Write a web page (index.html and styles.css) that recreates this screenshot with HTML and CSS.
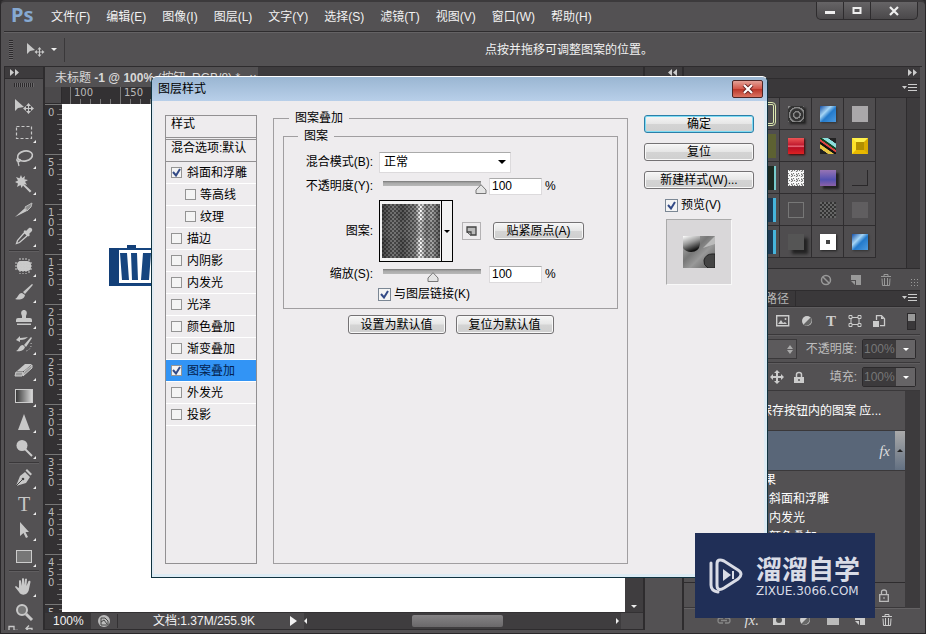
FILE: index.html
```html
<!DOCTYPE html>
<html lang="zh-CN">
<head>
<meta charset="utf-8">
<title>Photoshop</title>
<link rel="stylesheet" href="styles.css">
</head>
<body>
<div class="app">
  <header class="menubar">
    <span class="logo">Ps</span>
    <nav class="menus">
      <a href="#">文件(F)</a><a href="#">编辑(E)</a><a href="#">图像(I)</a><a href="#">图层(L)</a><a href="#">文字(Y)</a><a href="#">选择(S)</a><a href="#">滤镜(T)</a><a href="#">视图(V)</a><a href="#">窗口(W)</a><a href="#">帮助(H)</a>
    </nav>
    <div class="winctl">
      <button aria-label="最小化"><svg width="12" height="10"><path d="M1 5h10v3H1z" fill="#eee"/></svg></button>
      <button aria-label="最大化"><svg width="12" height="10"><path d="M2.500 2h7v5h-7z" fill="none" stroke="#eee" stroke-width="2"/></svg></button>
      <button class="wide" aria-label="关闭"><svg width="12" height="10"><path d="M2 1l8 8M10 1l-8 8" stroke="#eee" stroke-width="2.200"/></svg></button>
    </div>
  </header>

  <div class="options">
    <span class="grip-v"></span>
    <svg class="ic" width="20" height="16" viewBox="0 0 20 16"><path d="M1 1v11l3-3 5-1z"/><path d="M13.500 5l2 2.500h-1.500v2h2v-1.500l2.500 2-2.500 2v-1.500h-2v2h1.500l-2 2.500-2-2.500h1.500v-2h-2v1.500L8.500 10l2.500-2v1.500h2v-2h-1.500z"/></svg>
    <span class="caret"></span>
    <span class="hint">点按并拖移可调整图案的位置。</span>
  </div>

  <main class="work">
    <aside class="tools">
      <div class="dockhead left"><svg width="9" height="7"><path d="M0 0l4 3.500L0 7zM5 0l4 3.500L5 7z" fill="#ccc"/></svg></div>
      <div class="grip-h"></div>
      <button class="solo" aria-label="移动"><svg class="ic" viewBox="0 0 20 20"><path d="M1 3v12l3-3 6-1z"/><path d="M14.500 7l2.500 3h-2v2h2v-2l3 2.500-3 2.500v-2h-2v2h2l-2.500 3-2.500-3h2v-2h-2v2L9 12.500l3-2.500v2h2v-2h-2z"/></svg></button>
      <button aria-label="选框"><svg class="ln" viewBox="0 0 20 20"><path d="M2.500 4.500h15v12h-15z" stroke-dasharray="3 2"/></svg></button>
      <button aria-label="套索"><svg class="ln" viewBox="0 0 20 20"><ellipse cx="11" cy="8" rx="7.500" ry="5" transform="rotate(-12 11 8)" stroke-width="1.600"/><path d="M4 10c-3 2 0 5 2 3s-3-3-2 1l1 4"/></svg></button>
      <button aria-label="魔棒"><svg class="ic" viewBox="0 0 20 20"><path d="M7 1l1.200 3L11 2l-.6 3.300L14 6l-3 1.800 2 3-3-.8 7.500 7-1.600 1.600L9 11.500 7.500 14l-1-3L3 13l1-3.500L1 8l3-1.500L2 3l3.500 1.300z"/></svg></button>
      <button aria-label="切片"><svg class="ic" viewBox="0 0 20 20"><path d="M1 17l10-9 2 3z"/><path d="M11 7l7-4-1 4-4 4z" fill="#8d8d8d" stroke="#bbb"/></svg></button>
      <button aria-label="吸管"><svg class="ic" viewBox="0 0 20 20"><path d="M12 5l3-3c2-1 4 1 3 3l-3 3 1 1-1.500 1.500-5-5L11 4z"/><path d="M10.500 6.500l3 3-8 7-3 1 1-3z" fill="none" stroke="#ccc" stroke-width="1.300"/></svg></button>
      <hr>
      <button aria-label="修补"><svg class="ic" viewBox="0 0 20 20"><rect x="3" y="5" width="14" height="10" rx="4"/><path d="M6 2v16M9 2v16M12 2v16M15 3v14M1 7h18M1 10h18M1 13h18" stroke="#ccc" stroke-width="1" stroke-dasharray="2 1"/></svg></button>
      <button aria-label="画笔"><svg class="ic" viewBox="0 0 20 20"><path d="M18 2c1 0 1 1 0 2l-7 8-2-2z"/><path d="M8 11l3 2c-1 5-6 5-10 4 3-1 3-6 7-6z"/></svg></button>
      <button aria-label="图章"><svg class="ic" viewBox="0 0 20 20"><path d="M8 8c-4-8 8-8 4 0v2h4q2 0 2 2v2H2v-2q0-2 2-2h4zM3 15.500h14V17H3z"/></svg></button>
      <button aria-label="历史记录画笔"><svg class="ic" viewBox="0 0 20 20"><path d="M17 3l1 1-6 9-2-2zM9 11l2 2c-1 4-6 5-9 4 3-1 3-6 7-6zM2 6l4-4v2c4 0 6-1 8-1-2 2-4 3-8 3v2z"/><path d="M17 9c1 3-1 7-5 8" fill="none" stroke="#ccc" stroke-dasharray="1 2"/></svg></button>
      <button aria-label="橡皮擦"><svg class="ic" viewBox="0 0 20 20"><path d="M3 11l8-7h7l-8 7z"/><path d="M2 12h7l-1 4H1zM10 12l8-7v3l-9 8z" fill="#999" stroke="#ccc"/></svg></button>
      <button aria-label="渐变"><svg class="ic" viewBox="0 0 20 20"><defs><linearGradient id="g1"><stop stop-color="#333"/><stop offset="1" stop-color="#ddd"/></linearGradient></defs><rect x="1.500" y="3.500" width="17" height="13" fill="url(#g1)" stroke="#ccc"/></svg></button>
      <button aria-label="锐化"><svg class="ic" viewBox="0 0 20 20"><path d="M10 2l6 16H4z"/></svg></button>
      <button aria-label="减淡"><svg class="ic" viewBox="0 0 20 20"><circle cx="8" cy="7.500" r="5.500"/><path d="M11 11l7 7" stroke="#ccc" stroke-width="2"/></svg></button>
      <hr>
      <button aria-label="钢笔"><svg class="ic" viewBox="0 0 20 20"><path d="M13 1l5 5-1.500 1.500-5-5zM11 4l5 5-4 6-10 3 4-10z"/><circle cx="9" cy="11" r="1.300" fill="#444"/><path d="M2 18l7-7" stroke="#444"/></svg></button>
      <button aria-label="文字"><span class="tee">T</span></button>
      <button aria-label="路径选择"><svg class="ic" viewBox="0 0 20 20"><path d="M6 2v14l3.500-3 2.500 5 2-1-2.500-5H15z"/></svg></button>
      <button aria-label="矩形"><svg class="ic" viewBox="0 0 20 20"><rect x="2.500" y="4.500" width="15" height="12" fill="#777" stroke="#ccc"/></svg></button>
      <hr>
      <button aria-label="抓手"><svg class="ic" viewBox="0 0 20 20"><path d="M5 12V5q1-2 2 0l1 5V3q1-2 2 0v6l1-6q1-1 2 0l-.5 7 2-5q2-1 2 1l-1.500 7c-1 7-8 7-10 3L1 11q1-2 2 0z"/></svg></button>
      <button class="solo" aria-label="缩放"><svg class="ln" viewBox="0 0 20 20"><circle cx="8" cy="8" r="5" fill="#777" stroke-width="2"/><path d="M12 12l6 6" stroke-width="3"/></svg></button>
      <div class="swap"><svg class="ln" width="30" height="8" viewBox="0 0 30 8"><path d="M2 5.500V1.500h5v4h4M19 3.500h6v4M22 .5l-3 3 3 3" stroke-width="1.300"/></svg></div>
    </aside>

    <section class="doc">
      <div class="doctabs"><span class="doctab">未标题 <b>-1 @ 100%</b> (按钮, RGB/8) * <span class="x">×</span></span></div>
      <div class="sheet">
        <div class="corner"></div>
        <div class="hruler"><span>100</span><span>150</span><span>200</span><span>250</span><span>300</span><span>350</span><span>400</span><span>450</span><span>500</span><span>550</span><span>600</span></div>
        <div class="vruler"><span>0</span><span>50</span><span>100</span><span>150</span><span>200</span><span>250</span><span>300</span><span>350</span><span>400</span><span>450</span><span>500</span></div>
        <div class="canvas">
          <svg class="art" width="84" height="42" viewBox="0 0 84 42"><path d="M0 3h84v38H0z" fill="#133f78"/><path d="M18 0h9v4h-9z" fill="#133f78"/><path d="M10 5h74v33H10z" fill="#fff"/><path d="M11 8h7l2 27h-7zM22 8h6l1 27h-6zM34 8h8l-2 27h-8zM10 3h74v2H10zM11 39h73v2H11z" fill="#16457f"/></svg>
        </div>
      </div>
      <div class="status">
        <span class="zoom">100%</span>
        <span class="share"><svg width="14" height="14"><circle cx="7" cy="7" r="6" fill="#bbb"/><path d="M4 4h4l3 3v4H4zM4 8l3-2 3 4" fill="none" stroke="#444"/></svg></span>
        <span class="size">文档:1.37M/255.9K</span>
        <span class="play"></span>
        <div class="hscroll"><i class="al"></i><b></b><i class="ar"></i></div>
      </div>
      <div class="vscroll"><i></i></div>
    </section>

    <div class="strip"><div class="dockhead"><svg width="9" height="7"><path d="M4 0L0 3.500 4 7zM9 0L5 3.500 9 7z" fill="#ccc"/></svg></div></div>

    <aside class="panels">
      <div class="dockhead"><svg width="9" height="7"><path d="M0 0l4 3.500L0 7zM5 0l4 3.500L5 7z" fill="#ccc"/></svg></div>
      <div class="phead"><svg class="pm" width="15" height="9"><path d="M0 2h5L2.500 5z" fill="#ccc"/><path d="M6 .5h9M6 3.500h9M6 6.500h9" stroke="#ccc"/></svg></div>
      <div class="styles">
        <div class="grid">
          <i></i><i></i><i><u class="ring"></u></i><i><u class="knob"></u></i><i><u class="blue"></u></i><i><u class="grey"></u></i>
          <i></i><i></i><i><u class="olive"></u></i><i><u class="red"></u></i><i><u class="multi"></u></i><i><u class="gold"></u></i>
          <i></i><i></i><i><u class="dark"></u></i><i><u class="noise"></u></i><i><u class="violet"></u></i><i><u class="bevel"></u></i>
          <i></i><i></i><i><u class="cyan"></u></i><i><u class="line"></u></i><i><u class="mesh"></u></i><i><u class="faint"></u></i>
          <i></i><i></i><i><u class="cyan"></u></i><i><u class="shade"></u></i><i><u class="dot"></u></i><i><u class="blue"></u></i>
        </div>
        <div class="ptrack"></div>
      </div>
      <div class="pfoot">
        <svg class="dim" width="12" height="12"><circle cx="6" cy="6" r="4.500" fill="none" stroke="#999" stroke-width="1.500"/><path d="M3 3l6 6" stroke="#999" stroke-width="1.500"/></svg>
        <svg class="dim" width="12" height="12"><path d="M1 1h10v10H6V6H1z" fill="#999"/><path d="M1 7h4v4z" fill="#999"/></svg>
        <svg class="dim" width="12" height="12"><path d="M1 2.500h10M4 2V.5h4V2M2 4.500l.5 7h7l.5-7M4.500 4v7M7.500 4v7" fill="none" stroke="#999"/></svg>
        <span class="sizer"></span>
      </div>
      <div class="phead tabs"><span>图层</span><span>通道</span><span class="last">路径</span><svg class="pm" width="15" height="9"><path d="M0 2h5L2.500 5z" fill="#ccc"/><path d="M6 .5h9M6 3.500h9M6 6.500h9" stroke="#ccc"/></svg></div>
      <div class="prow filter">
        <svg width="14" height="12"><path d="M.7.7h12v10H.7z" fill="none" stroke="#ccc" stroke-width="1.400"/><path d="M2 9l3-4 2 3 2-1 2 2z" fill="#ccc"/><circle cx="9.500" cy="4" r="1" fill="#ccc"/></svg>
        <svg width="14" height="12"><circle cx="7" cy="6" r="5" fill="#ccc"/><path d="M10.500 2.500a5 5 0 0 1-7 7z" fill="#666"/></svg>
        <span class="tsm">T</span>
        <svg width="14" height="12"><path d="M3 2.500h8v7H3z" fill="none" stroke="#ccc"/><path d="M1 .5h3v3H1zM10 .5h3v3h-3zM1 8.500h3v3H1zM10 8.500h3v3h-3z" fill="#555" stroke="#ccc"/></svg>
        <svg width="14" height="12"><path d="M4.500 5V.7h5l3 3v7H8" fill="none" stroke="#ccc" stroke-width="1.300"/><path d="M1 6h6v6H1zM9 1v3h3z" fill="#ccc"/></svg>
        <span class="toggle"></span>
      </div>
      <div class="prow">
        <select class="mode" aria-label="混合模式"><option>正常</option></select>
        <label for="op">不透明度:</label>
        <span class="combo"><input id="op" value="100%"><button aria-label="展开不透明度"></button></span>
      </div>
      <div class="prow">
        <svg class="lk" width="14" height="14"><path d="M7 0l3 3H8v3h3V4l3 3-3 3V8H8v3h2l-3 3-3-3h2V8H3v2L0 7l3-3v2h3V3H4z" fill="#ccc"/></svg>
        <svg class="lk2" width="12" height="13"><path d="M1 6h10v6H1z" fill="#ccc"/><path d="M3.500 6V3.500q0-2 2.500-2t2.500 2V6" fill="none" stroke="#ccc" stroke-width="1.500"/><path d="M6 8v2" stroke="#555" stroke-width="1.500"/></svg>
        <label for="fl">填充:</label>
        <span class="combo"><input id="fl" value="100%"><button aria-label="展开填充"></button></span>
      </div>
      <div class="layers">
        <div class="list">
          <div class="layer"><span>保存按钮内的图案 应...</span></div>
          <div class="layer on"><em>fx</em><b></b></div>
          <div class="fxs"><span class="top">效果</span><span>斜面和浮雕</span><span>内发光</span><span>颜色叠加</span></div>
          <div class="layer base"><svg width="10" height="13"><path d="M.7 5.700h8.600v6.600H.7zM2.500 5.500V3q0-2 2.500-2t2.500 2v2.500" fill="none" stroke="#bbb" stroke-width="1.300"/><path d="M5 8v2" stroke="#bbb"/></svg></div>
        </div>
      </div>
      <div class="lfoot">
        <svg width="14" height="12"><path d="M6 9H3q-2 0-2-2.500T3 4h3M8 4h3q2 0 2 2.500T11 9H8M4 6.500h6" fill="none" stroke="#888" stroke-width="1.300"/></svg>
        <em>fx.</em>
        <svg width="14" height="12"><path d="M1 1h12v10H1z" fill="#ccc"/><circle cx="7" cy="6" r="3" fill="#555"/></svg>
        <svg width="14" height="12"><circle cx="6" cy="6" r="5" fill="#ccc"/><path d="M9.500 2.500a5 5 0 0 1-7 7z" fill="#666"/></svg>
        <svg width="14" height="12"><path d="M1 1h5l1 1h6v9H1z" fill="#bbb"/></svg>
        <svg width="14" height="12"><path d="M2 1h10v10H7V6H2zM2 7h4v4z" fill="#ccc"/></svg>
        <svg width="14" height="12"><path d="M2 2.500h10M5 2V.5h4V2M3 4.500l.5 7h7l.5-7M5.500 4v7M8.500 4v7" fill="none" stroke="#ccc"/></svg>
      </div>
    </aside>
  </main>
</div>

<section class="dialog" role="dialog" aria-labelledby="dt">
  <header class="dtitle"><h1 id="dt">图层样式</h1><button aria-label="关闭"><svg width="12" height="10"><path d="M2 1l8 8M10 1L2 9" stroke="#622" stroke-width="4"/><path d="M2 1l8 8M10 1L2 9" stroke="#fff" stroke-width="2.200"/></svg></button></header>
  <div class="dbody">
    <div class="effects">
      <div class="eh first">样式</div>
      <div class="eh">混合选项:默认</div>
      <label><input type="checkbox" checked>斜面和浮雕</label>
      <label class="sub"><input type="checkbox">等高线</label>
      <label class="sub"><input type="checkbox">纹理</label>
      <label><input type="checkbox">描边</label>
      <label><input type="checkbox">内阴影</label>
      <label><input type="checkbox">内发光</label>
      <label><input type="checkbox">光泽</label>
      <label><input type="checkbox">颜色叠加</label>
      <label><input type="checkbox">渐变叠加</label>
      <label class="sel"><input type="checkbox" checked>图案叠加</label>
      <label><input type="checkbox">外发光</label>
      <label><input type="checkbox">投影</label>
    </div>
    <fieldset class="outer">
      <legend>图案叠加</legend>
      <fieldset class="inner">
        <legend>图案</legend>
        <div class="frow"><label class="fl" for="bm">混合模式(B):</label><select id="bm" class="blend"><option>正常</option></select></div>
        <div class="frow"><label class="fl" for="o1">不透明度(Y):</label><input type="range" aria-label="不透明度" value="100"><input class="num" id="o1" value="100"><span>%</span></div>
        <div class="frow tall"><span class="fl">图案:</span>
          <button class="pattern" aria-label="图案拾色器"><span class="pat"></span><span class="drop"></span></button>
          <button class="new" aria-label="新建图案"><svg width="11" height="10"><path d="M1 1h9v8H5V6H1z" fill="#bbb" stroke="#444" stroke-width="1.300"/><path d="M1 6l4 3.500" stroke="#444"/></svg></button>
          <button class="btn snap">贴紧原点(A)</button>
        </div>
        <div class="frow short"><label class="fl" for="s1">缩放(S):</label><input type="range" aria-label="缩放" value="50"><input class="num" id="s1" value="100"><span>%</span></div>
        <div class="frow short link"><label><input type="checkbox" checked>与图层链接(K)</label></div>
      </fieldset>
      <div class="defaults"><button class="btn">设置为默认值</button><button class="btn">复位为默认值</button></div>
    </fieldset>
    <div class="actions">
      <button class="btn primary">确定</button>
      <button class="btn">复位</button>
      <button class="btn">新建样式(W)...</button>
      <label><input type="checkbox" checked>预览(V)</label>
      <div class="preview"><svg width="32" height="32" viewBox="0 0 32 32"><defs><linearGradient id="p1" x2="1" y2="1"><stop stop-color="#bbb"/><stop offset=".4" stop-color="#777"/><stop offset=".6" stop-color="#999"/><stop offset="1" stop-color="#555"/></linearGradient><linearGradient id="p2" x2=".4" y2="1"><stop stop-color="#fff"/><stop offset=".5" stop-color="#999"/><stop offset="1" stop-color="#111"/></linearGradient></defs><path d="M0 0h32v32H0z" fill="url(#p1)"/><path d="M20 12L32 0v8z" fill="#bbb"/><path d="M0 0h17v8q-1 8-9 8-5 0-8-4z" fill="url(#p2)"/><path d="M32 18v14h-7q-5-3-4-8 2-6 8-6z" fill="#444" stroke="#222"/></svg></div>
    </div>
  </div>
</section>

<div class="brand">
  <svg width="36" height="38" viewBox="0 0 36 38"><path d="M3 6v22q0 6 7 7" fill="none" stroke="#d9dce6" stroke-width="3" stroke-linecap="round"/><path d="M9 7q0-6 7-3l14 9q6 4 0 9l-14 9q-7 4-7-3z" fill="none" stroke="#d9dce6" stroke-width="3"/><path d="M15 12l8 6-8 6z" fill="#d9dce6"/><path d="M25 14v8" stroke="#d9dce6" stroke-width="2"/></svg>
  <div><strong>溜溜自学</strong><small>ZIXUE.3066.COM</small></div>
</div>
</body>
</html>
```

FILE: styles.css
```css
* { box-sizing: border-box; }
html, body { height: 100%; margin: 0; }
body { position: relative; overflow: hidden; background: #2c2a2c; font: 12px/16px "Liberation Sans", "Noto Sans CJK SC", sans-serif; color: #e6e6e6; }
button, input, select { font: inherit; color: inherit; margin: 0; padding: 0; border: 0; border-radius: 0; }
button { display: flex; align-items: center; justify-content: center; background: none; }
a { color: inherit; text-decoration: none; }
svg { display: block; flex: none; }

.app { height: 100%; display: flex; flex-direction: column; background: #535153; border: 1px solid #2a282a; border-top: 2px solid #3c3a3c; border-radius: 5px 5px 0 0; padding: 0 3px 3px; }
.menubar { height: 30px; flex: none; display: flex; align-items: center; border-bottom: 1px solid #2e2c2e; }
.logo { width: 31px; margin: 0 9px 4px 7px; font: bold 20px/26px "Noto Sans", sans-serif; color: #86a9d2; }
.menus { display: flex; gap: 16px; flex: 1; color: #f2f2f2; }
.winctl { display: flex; align-self: flex-start; margin-right: 4px; border: 1px solid #2e2c2e; border-top: 0; border-radius: 0 0 5px 5px; background: linear-gradient(#666466, #4a484a); }
.winctl button { width: 27px; height: 17px; border-right: 1px solid #2e2c2e; }
.winctl .wide { width: 46px; border: 0; }
.options { height: 35px; flex: none; display: flex; align-items: center; border-top: 1px solid #646264; border-bottom: 1px solid #2e2c2e; }
.grip-v { width: 4px; height: 20px; margin: 0 13px 0 5px; background: repeating-linear-gradient(#2c2a2c 0 1px, #6a686a 1px 2px); }
.ic { fill: #c8c8c8; }
.ln { fill: none; stroke: #c8c8c8; stroke-width: 1.2; }
.caret { border: 3px solid transparent; border-top-color: #eee; border-bottom: 0; margin: 0 5px 0 5px; }
.hint { flex: 1; margin-left: 2px; padding-left: 420px; height: 24px; line-height: 24px; border-left: 1px solid #3a383a; color: #f2f2f2; }

.work { flex: 1; min-height: 0; display: flex; padding-right: 2px; }
.dockhead { height: 12px; flex: none; background: #3d3b3d; border-bottom: 1px solid #2e2c2e; display: flex; align-items: center; justify-content: flex-end; padding-right: 3px; }
.dockhead.left { justify-content: flex-start; padding-left: 5px; }

.tools { width: 41px; flex: none; border-right: 2px solid #2e2c2e; border-left: 1px solid #2e2c2e; overflow: hidden; }
.grip-h { width: 20px; height: 4px; margin: 4px 0 6px 9px; background: repeating-linear-gradient(90deg, #2c2a2c 0 1px, #6a686a 1px 2px); }
.tools button { width: 38px; height: 26px; position: relative; }
.tools button svg { width: 20px; height: 20px; }
.tools button::after { content: ""; position: absolute; right: 7px; bottom: 2px; border-left: 3px solid transparent; border-bottom: 3px solid #eee; }
.tools .solo::after { display: none; }
.tools hr { height: 2px; margin: 1px 4px; border: 0; background: #3a383a; border-bottom: 1px solid #605e60; }
.tee { font: 20px/22px "Liberation Serif", serif; color: #c8c8c8; }
.swap { padding-left: 2px; }

.doc { flex: 1; min-width: 0; display: grid; grid-template: 20px 1fr 18px / 1fr 18px; }
.doctabs { grid-column: 1 / 3; background: #3d3b3d; }
.doctab { display: inline-block; width: 213px; height: 20px; padding-left: 10px; line-height: 22px; background: #535153; color: #d8d8d8; white-space: nowrap; }
.x { margin-left: 6px; }
.sheet { display: grid; grid-template: 17px 1fr / 17px 1fr; min-height: 0; min-width: 0; }
.corner { background: #4b494b; border-right: 1px solid #2c2a2c; border-bottom: 1px solid #2c2a2c; }
.hruler, .vruler { color: #b8b8b8; font: 10px/11px "DejaVu Sans", sans-serif; overflow: hidden; }
.hruler { display: flex; padding-left: 8px; background: repeating-linear-gradient(90deg, transparent 0 8px, #777 8px 9px, transparent 9px 10px) 0 100% / 100% 5px no-repeat #333133; }
.hruler span { flex: none; width: 50px; border-left: 1px solid #777; padding-left: 3px; }
.vruler { display: flex; flex-direction: column; background: repeating-linear-gradient(#777 0 1px, transparent 1px 10px) 100% 0 / 5px 100% no-repeat, repeating-linear-gradient(#777 0 1px, transparent 1px 5px) 100% 0 / 3px 100% no-repeat #333133; }
.vruler span { flex: none; height: 50px; border-top: 1px solid #777; padding: 3px 8px 0 3px; line-height: 10px; word-break: break-all; width: 17px; }
.canvas { background: #fff; padding: 141px 0 0 47px; overflow: hidden; }
.vscroll { grid-area: 2 / 2; background: #3f3d3f; display: flex; align-items: flex-end; justify-content: center; padding-bottom: 4px; }
.vscroll i { border: 3px solid transparent; border-top-color: #eee; border-bottom: 0; }
.status { grid-area: 3 / 1 / 4 / 3; display: flex; align-items: center; background: #4c4a4c; border-top: 1px solid #333133; border-bottom: 1px solid #2e2c2e; color: #f2f2f2; }
.zoom { width: 46px; padding-left: 8px; background: #3a383a; }
.share { width: 27px; display: flex; justify-content: center; border-right: 1px solid #333133; }
.size { width: 168px; padding-left: 35px; white-space: nowrap; }
.play { width: 14px; height: 10px; margin-left: 4px; border: 5px solid transparent; border-left: 7px solid #f2f2f2; }
.hscroll { flex: 1; margin-right: 22px; align-self: stretch; display: flex; align-items: center; justify-content: space-between; background: #3f3d3f; }
.hscroll b { width: 91px; height: 12px; margin-right: 8px; border-radius: 2px; background: linear-gradient(#858385, #6a686a); }
.hscroll i { border: 3px solid transparent; }
.hscroll .al { border-right-color: #eee; border-left: 0; }
.hscroll .ar { border-left-color: #eee; border-right: 0; margin-right: 2px; }

.strip { width: 40px; flex: none; background: #535153; border: solid #2e2c2e; border-width: 0 1px 0 2px; }
.strip .dockhead { padding-right: 5px; }
.panels { width: 237px; flex: none; display: flex; flex-direction: column; border-left: 1px solid #2e2c2e; overflow: hidden; }
.phead { height: 19px; flex: none; display: flex; align-items: center; background: #3a383a; border-bottom: 1px solid #2e2c2e; color: #b4b4b4; }
.pm { margin: 0 3px 0 auto; }
.styles { height: 170px; flex: none; display: flex; justify-content: space-between; background: #474547; }
.ptrack { width: 14px; background: #3d3b3d; border-left: 1px solid #2e2c2e; }
.grid { display: grid; grid-template-columns: repeat(6, 32px); grid-auto-rows: 32px; }
.grid i { display: flex; align-items: center; justify-content: center; background: #4f4d4f; border: solid #2f2d2f; border-width: 0 1px 1px 0; }
.grid u { width: 16px; height: 16px; }
.ring { border: 3px double #dce8b0; border-radius: 4px; }
.grid .ring, .grid .olive, .grid .dark, .grid .cyan { width: 24px; height: 24px; }
.knob { background: repeating-radial-gradient(circle at 55% 55%, #333 0 2px, #888 3px 4px); box-shadow: 2px 2px 2px #222; }
.blue { background: linear-gradient(135deg, #164fa4, #a5d5f5 35%, #237acb 55%, #4d9be0); box-shadow: 1px 1px 2px #333; }
.grey { background: #aaa8aa; }
.olive { background: #5d6132; }
.red { background: linear-gradient(#e55, #c0192d 45%, #f58390 50%, #b80d24 60%, #d22); box-shadow: 1px 1px 2px #400; }
.multi { background: linear-gradient(35deg, #222 20%, #e9c745 22% 35%, #111 38% 45%, #d44 48% 54%, #142 56% 62%, #8de0dd 65% 78%, #222 80%); }
.gold { border: 4px solid; border-color: #fff14b #d9aa00 #e8b800 #fce029; background: #b28f00; }
.dark { background: #1c2a22; border-right: 2px solid #7cc; }
.noise { background: repeating-conic-gradient(#eee 0 11%, #777 12% 17%, #fff 18% 26%) 0 0 / 5px 5px; }
.violet { background: linear-gradient(#9774b4, #5351b0 60%, #8c61a8); box-shadow: 3px 3px 2px #222; }
.bevel { border: solid #2a282a; border-width: 0 1px 1px 0; }
.cyan { background: #1c3a54; border-right: 3px solid #46b4dc; }
.line { border: 1px solid #777; }
.mesh { background: repeating-conic-gradient(#333 0 25%, #666 0 50%) 0 0 / 4px 4px; }
.faint { background: #605e60; }
.shade { background: #555; box-shadow: 4px 4px 3px #222; }
.dot { border: 6px solid #fff; background: #444; box-shadow: 1px 1px 2px #222; }
.pfoot { height: 23px; flex: none; display: flex; align-items: center; justify-content: flex-end; gap: 18px; background: #4f4d4f; border-top: 1px solid #2e2c2e; border-bottom: 1px solid #2e2c2e; }
.sizer { width: 8px; height: 8px; margin: 4px 2px 0 0; background: radial-gradient(circle, #999 1px, transparent 1px) 0 0 / 3px 3px; }
.tabs { height: 16px; }
.tabs span { padding: 0 6px; border-right: 1px solid #2e2c2e; }
.tabs span:first-child { padding: 0 7px 0 6px; }
.prow { height: 28px; flex: none; display: flex; align-items: center; justify-content: flex-end; padding-right: 4px; border-bottom: 1px solid #3a383a; border-top: 1px solid #5f5d5f; color: #bdbdbd; }
.filter { gap: 10px; }
.tsm { width: 14px; text-align: center; font: bold 15px/16px "Liberation Serif", serif; color: #ccc; }
.toggle { width: 9px; height: 17px; margin-left: 11px; border: 1px solid #2c2a2c; background: linear-gradient(#999 45%, #3a383a 50%); }
.mode { width: 112px; height: 20px; margin-right: 9px; appearance: none; border: 1px solid #3a383a; background: url("data:image/svg+xml,%3Csvg xmlns='http://www.w3.org/2000/svg' width='6' height='9'%3E%3Cpath d='M0 4l3-4 3 4zM0 5h6L3 9z' fill='%23aaa'/%3E%3C/svg%3E") calc(100% - 3px) 50% no-repeat #5c5a5c; }
.prow label { margin-right: 5px; }
.lk { margin-right: 9px; }
.lk2 { margin-right: 25px; }
.combo { display: flex; height: 20px; border: 1px solid #2c2a2c; border-radius: 2px; }
.combo input { width: 33px; min-width: 0; padding-left: 1px; background: #3c3a3c; color: #777; }
.combo button { width: 19px; background: #666466; }
.combo button::after { content: ""; border: 3px solid transparent; border-top-color: #fff; border-bottom: 0; }
.layers { flex: 1; min-height: 0; padding-right: 15px; background: #3d3b3d; }
.list { height: 100%; display: flex; flex-direction: column; background: #535153; }
.layer { height: 40px; flex: none; display: flex; align-items: center; padding-left: 76px; border-bottom: 1px solid #3a383a; color: #fff; }
.on { background: #596678; justify-content: flex-end; }
em { font: italic 15px/16px "Liberation Serif", serif; color: #ddd; }
.on em { margin-right: 5px; }
.on b { width: 10px; align-self: stretch; display: flex; align-items: center; justify-content: center; background: linear-gradient(#aaa, #637082); }
.on b::after { content: ""; border: 3px solid transparent; border-bottom-color: #222; border-top: 0; }
.fxs { flex: 1; min-height: 0; overflow: hidden; display: flex; flex-direction: column; padding-left: 85px; color: #fff; }
.fxs span { height: 19px; flex: none; line-height: 18px; }
.fxs .top { margin-left: -17px; }
.base { height: 26px; justify-content: flex-end; padding-right: 16px; border-top: 1px solid #2e2c2e; }
.lfoot { height: 22px; flex: none; display: flex; align-items: center; justify-content: flex-end; gap: 13px; padding-right: 26px; border-top: 1px solid #646264; }

.dialog { position: absolute; left: 151px; top: 76px; width: 617px; height: 502px; display: flex; flex-direction: column; border: 1px solid #10323f; border-top-color: #fff; border-radius: 6px 6px 0 0; background: #eeecee; color: #000; box-shadow: inset -3px -3px 0 #dcebf4, inset 2px 0 0 #e0eaf2; }
.dtitle { height: 24px; flex: none; display: flex; align-items: center; justify-content: space-between; padding: 0 4px 0 6px; border-radius: 5px 5px 0 0; background: linear-gradient(#9ab6d2, #b8cfe9); }
h1 { margin: 0; font: inherit; }
.dtitle button { width: 31px; height: 18px; border: 1px solid #4c2525; border-radius: 2px; background: linear-gradient(#e3a197, #d3574a 48%, #b93427 50%, #da7362); }
.dbody { flex: 1; min-height: 0; display: flex; padding: 14px 13px 13px; }
.effects { width: 92px; flex: none; border: 1px solid #929092; }
.eh { height: 22px; padding-left: 5px; line-height: 17px; border-bottom: 1px solid #929092; white-space: nowrap; }
.first { height: 24px; border-bottom: 3px double #929092; }
.dbody label { display: flex; align-items: center; }
.effects label { height: 22px; padding-left: 5px; gap: 5px; border-bottom: 1px solid #fff; white-space: nowrap; }
.effects .sub { padding-left: 19px; gap: 4px; }
.effects .sel { background: #3294f5; color: #04214c; }
input[type="checkbox"] { appearance: none; flex: none; width: 13px; height: 13px; border: 1px solid #7b8794; background-color: #f4f4f4; background-position: center; background-repeat: no-repeat; }
.effects input[type="checkbox"] { width: 11px; height: 11px; border-color: #949494; }
input[type="checkbox"]:checked { background-image: url("data:image/svg+xml,%3Csvg xmlns='http://www.w3.org/2000/svg' width='9' height='9'%3E%3Cpath d='M1 4l3 3.500L8 1' fill='none' stroke='%23334a86' stroke-width='2'/%3E%3C/svg%3E"); }
fieldset { margin: 0; padding: 0; min-width: 0; border: 1px solid #a09ea0; }
legend { height: 18px; line-height: 18px; padding: 0 6px; }
.outer { flex: 1; margin: -6px 16px 0; padding: 0 9px; }
.outer > legend { margin-left: 6px; }
.inner { padding: 5px 0 4px; }
.inner > legend { margin-left: 14px; }
.frow { height: 24px; display: flex; align-items: center; }
.tall { height: 66px; }
.short { height: 20px; }
.dbody .fl { display: block; width: 89px; flex: none; margin-right: 6px; text-align: right; white-space: nowrap; }
.blend { width: 132px; height: 21px; padding-left: 4px; appearance: none; border: 1px solid #dcdadc; border-top-color: #aaa; background: url("data:image/svg+xml,%3Csvg xmlns='http://www.w3.org/2000/svg' width='8' height='4'%3E%3Cpath d='M0 0h8L4 4z'/%3E%3C/svg%3E") calc(100% - 4px) 50% no-repeat #fff; }
input[type="range"] { appearance: none; width: 108px; height: 16px; margin-right: 2px; background: linear-gradient(#777, #aaa 40%, #b8b8b8) 4px 3px / 98px 5px no-repeat; }
input[type="range"]::-webkit-slider-thumb { appearance: none; width: 12px; height: 10px; margin-top: 6px; background: url("data:image/svg+xml,%3Csvg xmlns='http://www.w3.org/2000/svg' width='12' height='10'%3E%3Cpath d='M6 .7L11 6v3.500H1V6z' fill='%23e4e4e4' stroke='%23777'/%3E%3C/svg%3E"); }
.num { width: 53px; height: 17px; margin-right: 3px; padding-left: 2px; background: #fff; border: 1px solid #dcdadc; border-top-color: #aaa; }
.pattern { width: 74px; height: 62px; border: 1px solid #000; background: #f2f2f2; align-items: stretch; }
.pat { flex: 1; margin: 3px 1px 3px 2px; background: repeating-conic-gradient(rgba(0,0,0,.4) 0 25%, transparent 0 50%) 0 0 / 4px 4px, linear-gradient(transparent 30%, rgba(120,120,120,.35) 31% 62%, transparent 63%), linear-gradient(90deg, #444, #777 20%, #555 35%, #777 50%, #888 58%, #fff 66%, #888 76%, #aaa 86%, #555); }
.drop { width: 11px; border-left: 1px solid #000; display: flex; align-items: center; justify-content: center; }
.drop::after { content: ""; border: 3px solid transparent; border-top-color: #000; border-bottom: 0; }
.new { width: 19px; height: 18px; margin: 0 12px 0 9px; border: 1px solid #b4b2b4; }
.btn { height: 18px; border: 1px solid #747274; border-radius: 3px; background: linear-gradient(#f6f6f6, #e6e6e6 48%, #d4d4d4 52%, #cfcfcf); box-shadow: inset 0 0 0 1px #f8f8f8; white-space: nowrap; }
.snap { width: 91px; }
.link { padding-left: 94px; }
.link label { gap: 3px; }
.defaults { display: flex; justify-content: center; gap: 10px; margin-top: 6px; padding-left: 0; }
.defaults .btn { width: 98px; height: 19px; }
.actions { width: 110px; flex: none; display: flex; flex-direction: column; gap: 10px; }
.actions .btn { flex: none; }
.primary { border-color: #2c7fa8; box-shadow: inset 0 0 0 1px #7fdcf4; }
.actions label { gap: 3px; height: 12px; padding-left: 21px; }
.preview { width: 66px; height: 66px; margin: -2px 0 0 22px; display: flex; align-items: center; justify-content: center; background: #d9d7d9; border: 1px solid #aaa; border-color: #aaa #f8f8f8 #f8f8f8 #aaa; }

.brand { position: absolute; left: 695px; top: 533px; width: 180px; height: 85px; display: flex; align-items: center; gap: 12px; padding-left: 13px; background: #202f57; color: #d9dce6; }
.brand strong, .brand small { display: block; white-space: nowrap; }
.brand strong { font-size: 26px; line-height: 30px; }
.brand small { font: 12px/12px "DejaVu Sans", sans-serif; }
```
